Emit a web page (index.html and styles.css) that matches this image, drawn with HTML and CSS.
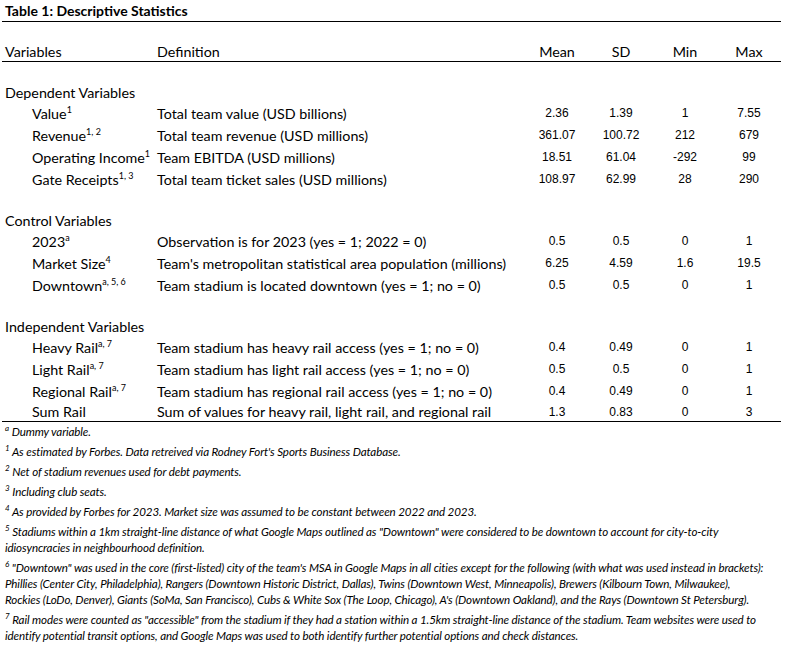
FILE: index.html
```html
<!DOCTYPE html>
<html lang="en">
<head>
<meta charset="utf-8">
<title>Table 1: Descriptive Statistics</title>
<link rel="stylesheet" href="styles.css">
</head>
<body>
<div class="sheet">
  <div class="title">Table 1: Descriptive Statistics</div>
  <div class="gap"></div>
  <div class="row head">
    <div class="lab">Variables</div><div class="def">Definition</div>
    <div class="hnum">Mean</div><div class="hnum">SD</div><div class="hnum">Min</div><div class="hnum">Max</div>
  </div>
  <div class="gap"></div>

  <div class="row sec"><div class="lab">Dependent Variables</div></div>
  <div class="row"><div class="lab ind">Value<sup>1</sup></div><div class="def">Total team value (USD billions)</div><div class="num">2.36</div><div class="num">1.39</div><div class="num">1</div><div class="num">7.55</div></div>
  <div class="row"><div class="lab ind">Revenue<sup>1, 2</sup></div><div class="def">Total team revenue (USD millions)</div><div class="num">361.07</div><div class="num">100.72</div><div class="num">212</div><div class="num">679</div></div>
  <div class="row"><div class="lab ind">Operating Income<sup>1</sup></div><div class="def">Team EBITDA (USD millions)</div><div class="num">18.51</div><div class="num">61.04</div><div class="num">-292</div><div class="num">99</div></div>
  <div class="row"><div class="lab ind">Gate Receipts<sup>1, 3</sup></div><div class="def">Total team ticket sales (USD millions)</div><div class="num">108.97</div><div class="num">62.99</div><div class="num">28</div><div class="num">290</div></div>
  <div class="gap"></div>

  <div class="row sec"><div class="lab">Control Variables</div></div>
  <div class="row"><div class="lab ind">2023<sup>a</sup></div><div class="def">Observation is for 2023 (yes = 1; 2022 = 0)</div><div class="num">0.5</div><div class="num">0.5</div><div class="num">0</div><div class="num">1</div></div>
  <div class="row"><div class="lab ind">Market Size<sup>4</sup></div><div class="def">Team's metropolitan statistical area population (millions)</div><div class="num">6.25</div><div class="num">4.59</div><div class="num">1.6</div><div class="num">19.5</div></div>
  <div class="row"><div class="lab ind">Downtown<sup>a, 5, 6</sup></div><div class="def">Team stadium is located downtown (yes = 1; no = 0)</div><div class="num">0.5</div><div class="num">0.5</div><div class="num">0</div><div class="num">1</div></div>
  <div class="gap"></div>

  <div class="row sec"><div class="lab">Independent Variables</div></div>
  <div class="row"><div class="lab ind">Heavy Rail<sup>a, 7</sup></div><div class="def">Team stadium has heavy rail access (yes = 1; no = 0)</div><div class="num">0.4</div><div class="num">0.49</div><div class="num">0</div><div class="num">1</div></div>
  <div class="row"><div class="lab ind">Light Rail<sup>a, 7</sup></div><div class="def">Team stadium has light rail access (yes = 1; no = 0)</div><div class="num">0.5</div><div class="num">0.5</div><div class="num">0</div><div class="num">1</div></div>
  <div class="row"><div class="lab ind">Regional Rail<sup>a, 7</sup></div><div class="def">Team stadium has regional rail access (yes = 1; no = 0)</div><div class="num">0.4</div><div class="num">0.49</div><div class="num">0</div><div class="num">1</div></div>
  <div class="row last"><div class="lab ind">Sum Rail</div><div class="def">Sum of values for heavy rail, light rail, and regional rail</div><div class="num">1.3</div><div class="num">0.83</div><div class="num">0</div><div class="num">3</div></div>

  <div class="notes">
    <p><sup>a</sup> Dummy variable.</p>
    <p><sup>1</sup> As estimated by Forbes. Data retreived via Rodney Fort's Sports Business Database.</p>
    <p><sup>2</sup> Net of stadium revenues used for debt payments.</p>
    <p><sup>3</sup> Including club seats.</p>
    <p><sup>4</sup> As provided by Forbes for 2023. Market size was assumed to be constant between 2022 and 2023.</p>
    <p><sup>5</sup> Stadiums within a 1km straight-line distance of what Google Maps outlined as "Downtown" were considered to be downtown to account for city-to-city<br>idiosyncracies in neighbourhood definition.</p>
    <p><sup>6</sup> "Downtown" was used in the core (first-listed) city of the team's MSA in Google Maps in all cities except for the following (with what was used instead in brackets):<br>Phillies (Center City, Philadelphia), Rangers (Downtown Historic District, Dallas), Twins (Downtown West, Minneapolis), Brewers (Kilbourn Town, Milwaukee),<br>Rockies (LoDo, Denver), Giants (SoMa, San Francisco), Cubs &amp; White Sox (The Loop, Chicago), A's (Downtown Oakland), and the Rays (Downtown St Petersburg).</p>
    <p><sup>7</sup> Rail modes were counted as "accessible" from the stadium if they had a station within a 1.5km straight-line distance of the stadium. Team websites were used to<br>identify potential transit options, and Google Maps was used to both identify further potential options and check distances.</p>
  </div>
</div>
</body>
</html>
```

FILE: styles.css
```css
html, body {
  margin: 0;
  padding: 0;
  background: #ffffff;
}

body {
  font-family: Lato, "Noto Sans", sans-serif;
  color: #000000;
  width: 785px;
  height: 652px;
  overflow: hidden;
}

.sheet {
  padding-left: 2px;
  width: 779px;
}

.title {
  height: 21px;
  line-height: 21px;
  font-weight: bold;
  font-size: 14px;
  border-bottom: 1px solid #000;
  padding-left: 3px;
}

.gap {
  height: 20px;
}

.row {
  display: grid;
  grid-template-columns: 155px 368px 64px 64px 64px 64px;
  height: 22px;
  align-items: center;
  font-size: 14.3px;
  white-space: nowrap;
}

.row.head {
  height: 19px;
  border-bottom: 1px solid #000;
}

.row.sec {
  height: 20px;
}

.row.last {
  height: 19px;
  border-bottom: 1px solid #000;
}

.lab {
  padding-left: 3px;
}

.lab.ind {
  padding-left: 30px;
}

.hnum {
  text-align: center;
}

.num {
  text-align: center;
  font-family: "Liberation Sans", Arial, sans-serif;
  font-size: 12px;
}

sup {
  font-size: 9px;
  line-height: 0;
  vertical-align: 6px;
}

.notes {
  padding-top: 2px;
  font-style: italic;
  font-size: 11.6px;
  letter-spacing: -0.12px;
}

.notes p {
  margin: 0 0 4px 0;
  padding-left: 3px;
  line-height: 16px;
  white-space: nowrap;
}

.notes sup {
  font-size: 8px;
  vertical-align: 5px;
  letter-spacing: 0;
}
```
